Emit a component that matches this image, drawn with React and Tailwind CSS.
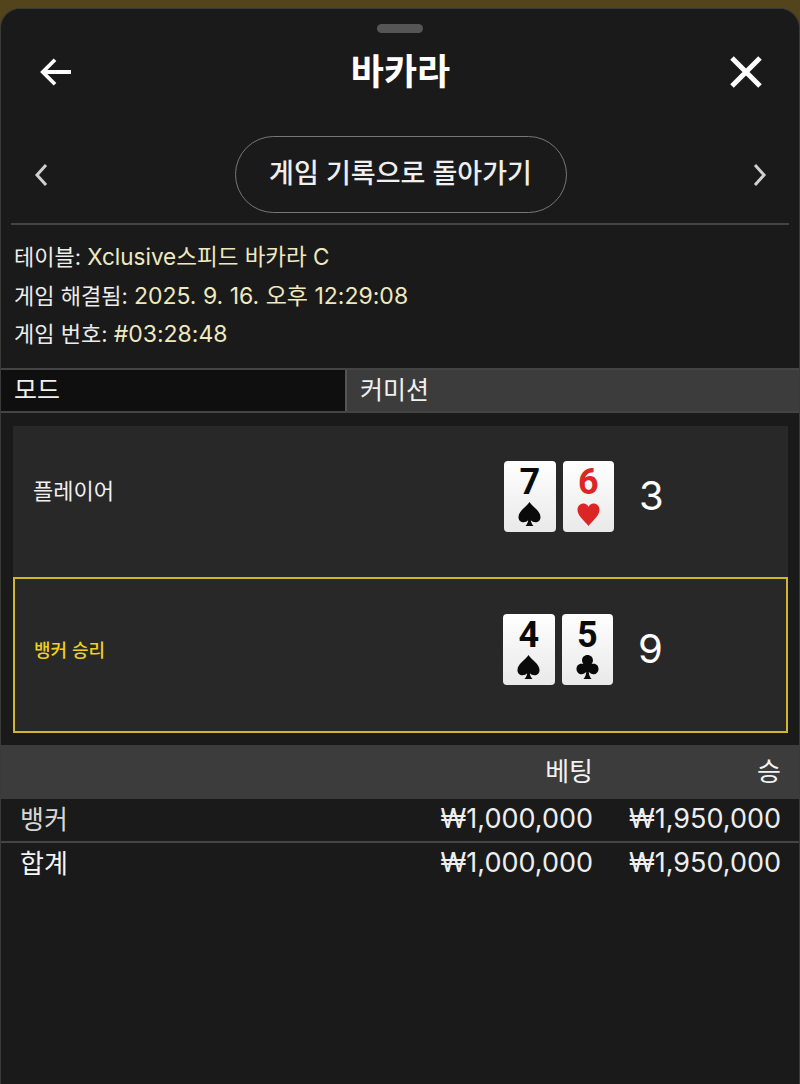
const FONT = "font-['Inter','Noto_Sans_CJK_KR',sans-serif]";

function Spade({ className }) {
  return (
    <svg viewBox="0 0 24 26" className={className} fill="currentColor">
      <path d="M12 0C9 5 0.500 9 0.500 15.800C0.500 19 3 21 5.800 21C7.800 21 9.500 20.300 10.600 19C10.400 21.300 9.500 23.300 7.800 25H16.200C14.500 23.300 13.600 21.300 13.400 19C14.500 20.300 16.200 21 18.200 21C21 21 23.500 19 23.500 15.800C23.500 9 15 5 12 0Z" />
    </svg>
  );
}

function Heart({ className }) {
  return (
    <svg viewBox="0 0 24 24" className={className} fill="currentColor">
      <path d="M12 24C8 18.500 0.500 13.500 0.500 7C0.500 3 3.500 0.500 6.800 0.500C9.200 0.500 11 1.800 12 4C13 1.800 14.800 0.500 17.200 0.500C20.500 0.500 23.500 3 23.500 7C23.500 13.500 16 18.500 12 24Z" />
    </svg>
  );
}

function Club({ className }) {
  return (
    <svg viewBox="0 0 24 26" className={className} fill="currentColor">
      <path d="M12 0C8.700 0 6.300 2.500 6.300 5.500C6.300 7 6.900 8.300 7.800 9.400C7 9.100 6.300 9 5.500 9C2.500 9 0.500 11.500 0.500 14.500C0.500 17.700 3 20 5.800 20C7.800 20 9.600 19 10.700 17.400C10.500 20.300 9.600 22.900 7.800 25H16.200C14.400 22.900 13.500 20.300 13.300 17.400C14.400 19 16.200 20 18.200 20C21 20 23.500 17.700 23.500 14.500C23.500 11.500 21.500 9 18.500 9C17.700 9 17 9.100 16.200 9.400C17.100 8.300 17.700 7 17.700 5.500C17.700 2.500 15.300 0 12 0Z" />
    </svg>
  );
}

function PlayingCard({ rank, suit, red }) {
  const color = red ? "text-[#dc2626]" : "text-[#0a0a0a]";
  return (
    <div className={`flex h-[71px] w-[51.500px] flex-col items-center rounded-[4px] bg-gradient-to-b from-white to-[#e9e9e9] ${color}`}>
      <span className="mt-[3px] h-[32px] font-['Roboto',sans-serif] text-[36px] leading-[36px] font-bold">{rank}</span>
      {suit === "spade" && <Spade className="mt-[6px] h-[25px] w-[23px]" />}
      {suit === "heart" && <Heart className="mt-[7px] h-[23px] w-[23px]" />}
      {suit === "club" && <Club className="mt-[6px] h-[25px] w-[23px]" />}
    </div>
  );
}

function HandRow({ label, labelClass, cards, score, wrapClass, cardsClass }) {
  return (
    <div className={`flex items-start ${wrapClass}`}>
      <div className={labelClass}>{label}</div>
      <div className={`flex gap-[7px] ${cardsClass}`}>
        {cards.map((c) => (
          <PlayingCard key={c.rank} {...c} />
        ))}
      </div>
      <div className="mt-[46px] ml-[25px] text-[40px] leading-[48px] text-white">{score}</div>
    </div>
  );
}

function InfoLine({ label, value, valueClass }) {
  return (
    <div className="h-[38.500px] text-[22px] leading-[38.500px] text-[#ececec]">
      {label}: <span className={`text-[#efe9c0] ${valueClass}`}>{value}</span>
    </div>
  );
}

function BetRow({ label, bet, win, labelClass }) {
  return (
    <div className="flex h-[42px] items-center pr-[18px] pl-[19px]">
      <span className={`flex-1 text-[26px] ${labelClass}`}>{label}</span>
      <span className="w-[200px] text-right text-[27px] text-[#eeeeee]">{bet}</span>
      <span className="w-[188px] text-right text-[27px] text-[#eeeeee]">{win}</span>
    </div>
  );
}

export default function App() {
  return (
    <div className={`h-[1084px] w-[800px] overflow-hidden bg-[#54441c] pt-[8px] ${FONT}`}>
      <div className="h-[1076px] rounded-t-[20px] border-x border-t border-[#3a3a36] bg-[#1a1a1a]">
        <div className="flex justify-center pt-[15px]">
          <div className="h-[9px] w-[46px] rounded-full bg-[#555555]" />
        </div>

        <div className="flex h-[78px] items-center justify-between pr-[37px] pl-[38px]">
          <svg viewBox="0 0 34 30" className="h-[30px] w-[32px]" fill="none" stroke="#ffffff" strokeWidth="4">
            <path d="M34 15H4M17 2L4 15L17 28" />
          </svg>
          <h1 className="text-[36px] leading-[44px] font-bold text-white">바카라</h1>
          <svg viewBox="0 0 32 32" className="h-[32px] w-[32px]" fill="none" stroke="#ffffff" strokeWidth="5">
            <path d="M2 2L30 30M30 2L2 30" />
          </svg>
        </div>

        <div className="mt-[25px] flex h-[77px] items-center justify-between pr-[32px] pl-[33px]">
          <svg viewBox="0 0 14 24" className="h-[24px] w-[14px]" fill="none" stroke="#d0d0d0" strokeWidth="3">
            <path d="M12 2L3 12L12 22" />
          </svg>
          <button className="flex h-[77px] w-[332px] items-center justify-center rounded-full border-[1.500px] border-[#777777] text-[27px] font-medium text-[#efefef]">
            게임 기록으로 돌아가기
          </button>
          <svg viewBox="0 0 14 24" className="h-[24px] w-[14px]" fill="none" stroke="#d0d0d0" strokeWidth="3">
            <path d="M2 2L11 12L2 22" />
          </svg>
        </div>

        <div className="mx-[10px] mt-[10px] h-[2px] bg-[#444444]" />

        <div className="mt-[13px] pl-[13px]">
          <InfoLine label="테이블" value="Xclusive스피드 바카라 C" valueClass="text-[22.500px]" />
          <InfoLine label="게임 해결됨" value="2025. 9. 16. 오후 12:29:08" valueClass="text-[23px]" />
          <InfoLine label="게임 번호" value="#03:28:48" valueClass="text-[23px]" />
        </div>

        <div className="mt-[14px] flex h-[45px] border-y-2 border-[#444444] text-[25px] text-[#f0f0f0]">
          <div className="flex w-[344px] items-center bg-[#0f0f0f] pt-[2px] pl-[13px]">모드</div>
          <div className="flex flex-1 items-center border-l-2 border-[#555555] bg-[#3c3c3c] pt-[2px] pl-[13px]">커미션</div>
        </div>

        <div className="mt-[13px] mr-[11px] ml-[12px] bg-[#282828]">
          <HandRow
            label="플레이어"
            labelClass="w-[491px] pt-[50px] pl-[20px] text-[22px] leading-[30px] text-[#f0f0f0]"
            wrapClass="h-[151px]"
            cardsClass="mt-[35px]"
            cards={[
              { rank: "7", suit: "spade" },
              { rank: "6", suit: "heart", red: true },
            ]}
            score="3"
          />
          <HandRow
            label="뱅커 승리"
            labelClass="w-[488px] pt-[57px] pl-[19px] text-[18px] leading-[30px] font-medium text-[#ecd022]"
            wrapClass="h-[156px] border-2 border-[#d0b62c]"
            cardsClass="mt-[35px]"
            cards={[
              { rank: "4", suit: "spade" },
              { rank: "5", suit: "club" },
            ]}
            score="9"
          />
        </div>

        <div className="mt-[12px] flex h-[54px] items-center justify-end bg-[#3c3c3c] pr-[18px] text-[26px] text-[#f2f2f2]">
          <span>베팅</span>
          <span className="w-[188px] text-right">승</span>
        </div>

        <BetRow label="뱅커" labelClass="text-[#d6d6d6]" bet="₩1,000,000" win="₩1,950,000" />
        <div className="h-[2px] bg-[#444444]" />
        <BetRow label="합계" labelClass="text-[#f5f5f5]" bet="₩1,000,000" win="₩1,950,000" />
      </div>
    </div>
  );
}
